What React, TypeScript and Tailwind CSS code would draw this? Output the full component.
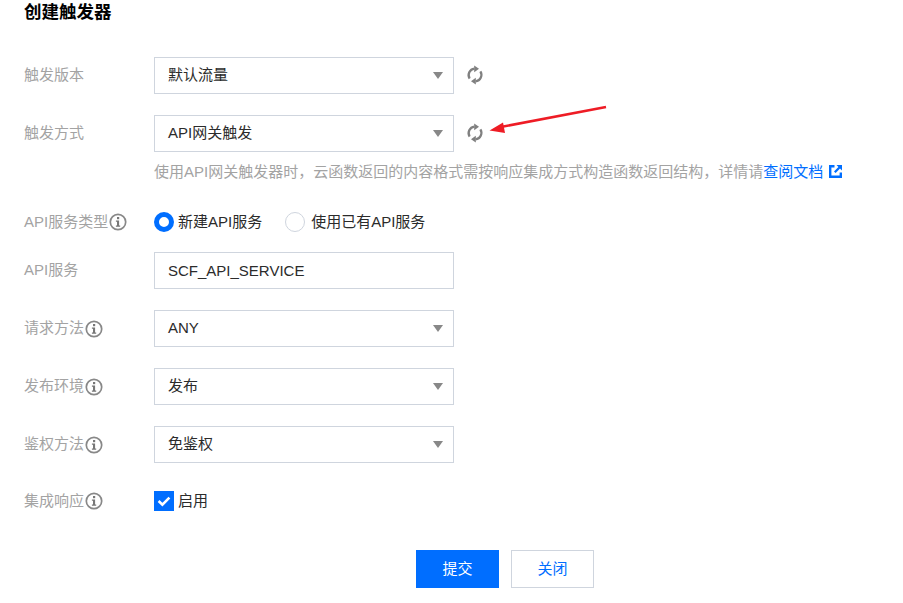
import { ReactNode } from "react";

const FONT = "font-['Liberation_Sans','Noto_Sans_CJK_SC',sans-serif]";

function InfoIcon() {
  return (
    <svg width="18" height="18" viewBox="0 0 18 18" className="shrink-0">
      <circle cx="9" cy="9" r="7.7" fill="none" stroke="#888888" strokeWidth="1.7" />
      <rect x="8" y="4" width="2.2" height="2.2" fill="#777777" />
      <path d="M6.9 7.6h3.2v5h1.1v1.2H6.9v-1.2H8V8.8H6.9z" fill="#777777" />
    </svg>
  );
}

function RefreshIcon() {
  return (
    <svg width="18" height="20" viewBox="0 0 18 20" className="shrink-0 -translate-y-px">
      <path
        d="M3.6 13.6A6.6 6.6 0 0 1 8.4 3.6M14.4 6.4A6.6 6.6 0 0 1 9.6 16.4"
        fill="none"
        stroke="#808080"
        strokeWidth="2.3"
      />
      <path d="M8.2 0.4v6.8L13 3.8z" fill="#808080" />
      <path d="M9.8 12.8v6.8L5 16.2z" fill="#808080" />
    </svg>
  );
}

function Caret() {
  return <span className="h-0 w-0 border-x-[5px] border-t-[7px] border-x-transparent border-t-[#888888]" />;
}

function Select({ value }: { value: string }) {
  return (
    <div className="flex h-[37px] w-[300px] items-center justify-between border border-[#cfd5de] bg-white pl-[13px] pr-[10px] text-[15px] text-[#2b2b2b]">
      <span>{value}</span>
      <Caret />
    </div>
  );
}

function Row({
  label,
  info,
  className,
  children,
}: {
  label: string;
  info?: boolean;
  className?: string;
  children: ReactNode;
}) {
  return (
    <div className={`flex items-center ${className ?? ""}`}>
      <div className="flex w-[130px] items-center gap-px text-[15px] text-[#a3a3a3]">
        <span>{label}</span>
        {info && <InfoIcon />}
      </div>
      {children}
    </div>
  );
}

export default function App() {
  return (
    <div className={`relative h-[603px] w-[903px] overflow-hidden bg-white pl-6 ${FONT}`}>
      <h1 className="h-[25px] text-[17.5px] font-bold leading-[25px] text-black">创建触发器</h1>

      <Row label="触发版本" className="mt-[32px]">
        <Select value="默认流量" />
        <span className="ml-3">
          <RefreshIcon />
        </span>
      </Row>

      <Row label="触发方式" className="mt-[21px]">
        <Select value="API网关触发" />
        <span className="ml-3">
          <RefreshIcon />
        </span>
      </Row>

      <p className="ml-[130px] mt-[10px] h-5 whitespace-nowrap text-[15px] leading-5 text-[#a3a3a3]">
        使用API网关触发器时，云函数返回的内容格式需按响应集成方式构造函数返回结构，详情请
        <span className="text-[#006eff]">查阅文档</span>
        <svg width="13" height="13" viewBox="0 0 13 13" className="ml-[6px] inline-block align-[-1px]">
          <path d="M5.5 1.2H1.2v10.6h10.6V7.5" fill="none" stroke="#006eff" strokeWidth="2.4" />
          <path d="M7.5 0H13v5.5L11 3.6 6.6 8 5 6.4 9.4 2z" fill="#006eff" />
        </svg>
      </p>

      <Row label="API服务类型" info className="mt-[30px] h-5">
        <span className="flex items-center text-[15px] text-[#2b2b2b]">
          <span className="h-5 w-5 rounded-full border-[5px] border-[#006eff] bg-white" />
          <span className="ml-1">新建API服务</span>
          <span className="ml-[23px] h-5 w-5 rounded-full border border-[#cfd5de] bg-white" />
          <span className="ml-[6px]">使用已有API服务</span>
        </span>
      </Row>

      <Row label="API服务" className="mt-[20px]">
        <div className="flex h-[37px] w-[300px] items-center border border-[#cfd5de] bg-white pl-[13px] pt-px text-[15px] text-[#2b2b2b]">
          SCF_API_SERVICE
        </div>
      </Row>

      <Row label="请求方法" info className="mt-[21px]">
        <Select value="ANY" />
      </Row>
      <Row label="发布环境" info className="mt-[21px]">
        <Select value="发布" />
      </Row>
      <Row label="鉴权方法" info className="mt-[21px]">
        <Select value="免鉴权" />
      </Row>

      <Row label="集成响应" info className="mt-[28px] h-5">
        <span className="flex items-center text-[15px] text-[#2b2b2b]">
          <span className="flex h-5 w-5 items-center justify-center bg-[#006eff]">
            <svg width="14" height="14" viewBox="0 0 14 14">
              <path d="M1.6 7l3.8 3.6L12.4 3.6" fill="none" stroke="white" strokeWidth="2.6" />
            </svg>
          </span>
          <span className="ml-1">启用</span>
        </span>
      </Row>

      <div className="ml-[392px] mt-[39px] flex gap-3 text-[15px]">
        <button className="h-[38px] w-[83px] bg-[#006eff] text-white">提交</button>
        <button className="h-[38px] w-[83px] border border-[#cfd5de] bg-white text-[#006eff]">关闭</button>
      </div>

      {/* annotation arrow drawn over the screenshot */}
      <svg width="130" height="36" viewBox="0 0 130 36" className="absolute left-[484px] top-[102px]">
        <path d="M122 5L14 25.5" fill="none" stroke="#ee1c25" strokeWidth="2.6" />
        <path d="M5.5 28.5L19 20.5L21 31z" fill="#ee1c25" />
      </svg>
    </div>
  );
}
